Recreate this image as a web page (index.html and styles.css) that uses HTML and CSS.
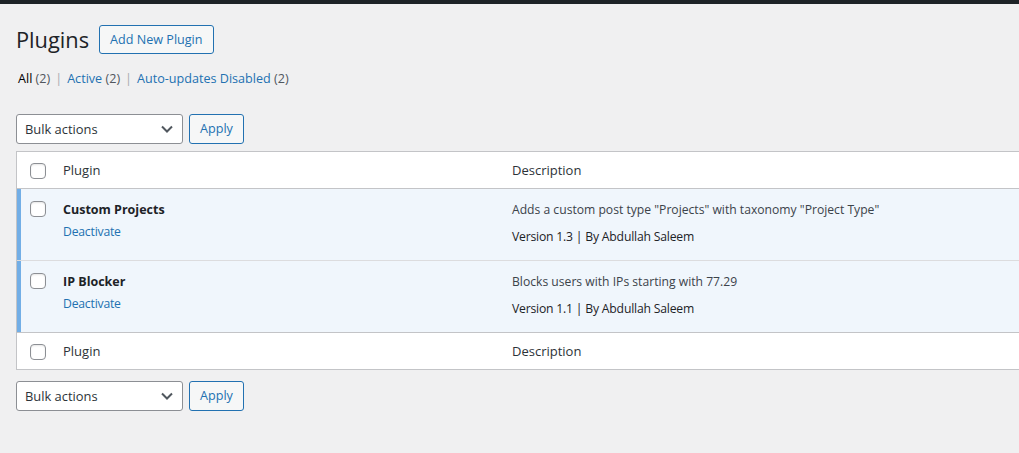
FILE: index.html
```html
<!DOCTYPE html>
<html lang="en">
<head>
<meta charset="utf-8">
<title>Plugins</title>
<link rel="stylesheet" href="styles.css">
</head>
<body>
<div class="adminbar"></div>
<div class="wrap">
  <div class="title-row">
    <h1 class="page-title">Plugins</h1>
    <a class="title-action" href="#">Add New Plugin</a>
  </div>
  <ul class="subsubsub">
    <li><a class="current" href="#">All <span class="count">(2)</span></a><span class="sep">|</span></li>
    <li><a href="#">Active <span class="count">(2)</span></a><span class="sep">|</span></li>
    <li><a href="#">Auto-updates Disabled <span class="count">(2)</span></a></li>
  </ul>
  <div class="tablenav top">
    <div class="select"><span>Bulk actions</span><svg class="chev" width="12" height="8" viewBox="0 0 12 8"><path d="M1 1.5l5 5 5-5" fill="none" stroke="#50575e" stroke-width="2"/></svg></div>
    <a class="button" href="#">Apply</a>
  </div>
  <div class="table-clip">
    <table class="plugins">
      <colgroup><col class="c-check"><col class="c-plugin"><col class="c-desc"></colgroup>
      <thead>
        <tr><th class="check"><span class="cb"></span></th><th>Plugin</th><th>Description</th></tr>
      </thead>
      <tbody>
        <tr class="active first">
          <td class="check"><span class="cb"></span></td>
          <td class="title"><strong>Custom Projects</strong><div class="actions"><a href="#">Deactivate</a></div></td>
          <td class="desc"><p>Adds a custom post type "Projects" with taxonomy "Project Type"</p><div class="meta">Version 1.3 | By Abdullah Saleem</div></td>
        </tr>
        <tr class="active">
          <td class="check"><span class="cb"></span></td>
          <td class="title"><strong>IP Blocker</strong><div class="actions"><a href="#">Deactivate</a></div></td>
          <td class="desc"><p>Blocks users with IPs starting with 77.29</p><div class="meta">Version 1.1 | By Abdullah Saleem</div></td>
        </tr>
      </tbody>
      <tfoot>
        <tr><th class="check"><span class="cb"></span></th><th>Plugin</th><th>Description</th></tr>
      </tfoot>
    </table>
  </div>
  <div class="tablenav bottom">
    <div class="select"><span>Bulk actions</span><svg class="chev" width="12" height="8" viewBox="0 0 12 8"><path d="M1 1.5l5 5 5-5" fill="none" stroke="#50575e" stroke-width="2"/></svg></div>
    <a class="button" href="#">Apply</a>
  </div>
</div>
</body>
</html>
```

FILE: styles.css
```css
html, body {
  margin: 0;
  padding: 0;
  background: #f0f0f1;
  overflow: hidden;
}
body {
  font-family: "Open Sans", "Noto Sans", sans-serif;
  font-size: 13px;
  color: #3c434a;
}
a { text-decoration: none; color: #2271b1; }

.adminbar {
  height: 4px;
  background: #1d2327;
}
.wrap {
  padding-left: 16px;
}
.title-row {
  display: flex;
  align-items: center;
  gap: 10px;
  padding-top: 21px;
  height: 29px;
}
.page-title {
  margin: 0;
  font-size: 21.8px;
  font-weight: 400;
  color: #1d2327;
  line-height: 29px;
}
.title-action {
  box-sizing: border-box;
  height: 29px;
  line-height: 27px;
  padding: 0 10px;
  border: 1px solid #2271b1;
  border-radius: 3px;
  background: #f6f7f7;
  color: #2271b1;
  font-size: 12.6px;
}
.subsubsub {
  list-style: none;
  margin: 16px 0 0 2px;
  padding: 0;
  display: flex;
  height: 18px;
  line-height: 18px;
  font-size: 12.6px;
  color: #646970;
}
.subsubsub a { color: #2271b1; }
.subsubsub a.current { color: #000; }
.subsubsub .count { color: #50575e; }
.subsubsub .sep { color: #a7aaad; margin: 0 5px 0 5px; }

.tablenav {
  display: flex;
  gap: 6px;
  height: 30px;
}
.tablenav.top { margin-top: 26px; }
.tablenav.bottom { margin-top: 11px; }
.select {
  box-sizing: border-box;
  width: 167px;
  height: 30px;
  border: 1px solid #8c8f94;
  border-radius: 3px;
  background: #fff;
  display: flex;
  align-items: center;
  justify-content: space-between;
  padding: 0 9px 0 8px;
  font-size: 12.9px;
  color: #2c3338;
}
.button {
  box-sizing: border-box;
  width: 55px;
  height: 30px;
  line-height: 28px;
  text-align: center;
  border: 1px solid #2271b1;
  border-radius: 3px;
  background: #f6f7f7;
  color: #2271b1;
  font-size: 12.6px;
}

.table-clip {
  margin-top: 7px;
  overflow: hidden;
}
.plugins {
  width: 1040px;
  table-layout: fixed;
  border-collapse: separate;
  border-spacing: 0;
  background: #fff;
  border: 1px solid #c3c4c7;
}
.c-check { width: 36px; }
.c-plugin { width: 449px; }
.plugins th {
  text-align: left;
  font-weight: 400;
  font-size: 13px;
  color: #2c3338;
  height: 37px;
  padding: 0 10px;
  box-sizing: border-box;
  vertical-align: middle;
}
.plugins thead th { border-bottom: 1px solid #c3c4c7; }
.plugins tfoot th { border-top: 1px solid #c3c4c7; }
.plugins th.check, .plugins td.check {
  padding: 0 0 0 13px;
}
.plugins th.check .cb { margin-top: 1px; }
.cb {
  display: block;
  box-sizing: border-box;
  width: 16px;
  height: 16px;
  border: 1px solid #8c8f94;
  border-radius: 4px;
  background: #fff;
  box-shadow: inset 0 1px 2px rgba(0,0,0,.1);
}
.plugins tbody tr.active td {
  background: #f0f6fc;
  vertical-align: top;
  border-top: 1px solid #dcdcde;
  padding: 11px 10px 0;
  height: 72px;
  box-sizing: border-box;
}
.plugins tbody tr.active.first td { border-top: 0; height: 71px; }
.plugins tbody tr.active td.check {
  box-shadow: inset 4px 0 0 #72aee6;
  padding: 12px 0 0 13px;
}
.title strong {
  display: block;
  font-size: 12.5px;
  font-weight: 700;
  color: #1d2327;
  line-height: 20px;
}
.actions {
  margin-top: 2px;
  line-height: 20px;
  font-size: 12.2px;
  letter-spacing: -0.2px;
}
.desc p {
  margin: 0;
  line-height: 20px;
  font-size: 12.15px;
  color: #3c434a;
}
.desc .meta {
  margin-top: 7px;
  line-height: 20px;
  font-size: 12.2px;
  letter-spacing: -0.2px;
  color: #1d2327;
}
```
